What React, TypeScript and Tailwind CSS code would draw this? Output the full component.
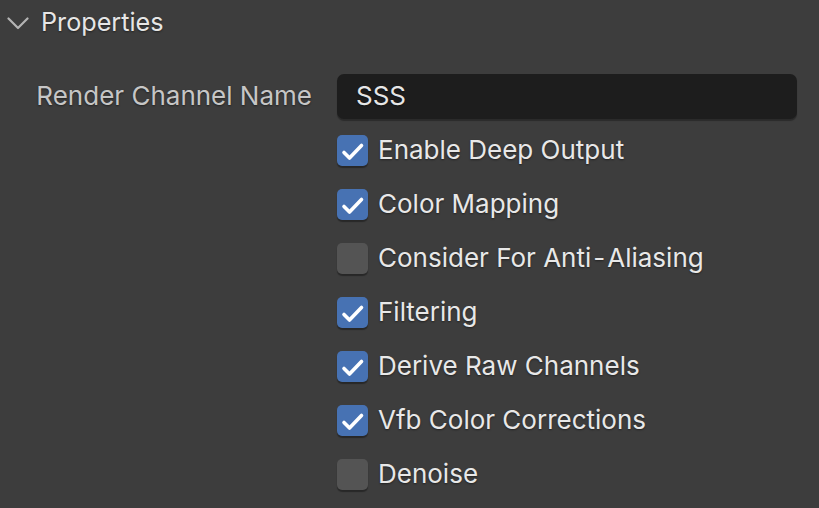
import React from "react";

const items: { label: React.ReactNode; checked: boolean }[] = [
  { label: "Enable Deep Output", checked: true },
  { label: "Color Mapping", checked: true },
  {
    label: (
      <>
        Consider For Anti<span className="mx-[2px]">-</span>Aliasing
      </>
    ),
    checked: false,
  },
  { label: "Filtering", checked: true },
  { label: "Derive Raw Channels", checked: true },
  { label: "Vfb Color Corrections", checked: true },
  { label: "Denoise", checked: false },
];

function Check({ checked }: { checked: boolean }) {
  return (
    <div
      className={
        checked
          ? "w-[31px] h-[31px] rounded-[5px] bg-[#4772b3] shadow-[0_2px_1px_rgba(0,0,0,0.35)] flex items-center justify-center shrink-0"
          : "w-[31px] h-[31px] rounded-[5px] bg-[#545454] shadow-[0_2px_1px_rgba(0,0,0,0.35)] shrink-0"
      }
    >
      {checked && (
        <svg width="31" height="31" viewBox="0 0 31 31">
          <path
            d="M7 17.5 L12.5 23 L24.5 10.5"
            fill="none"
            stroke="#ffffff"
            strokeWidth="3.6"
            strokeLinecap="round"
            strokeLinejoin="round"
          />
        </svg>
      )}
    </div>
  );
}

export default function App() {
  return (
    <div className="w-[819px] h-[508px] bg-[#3d3d3d] overflow-hidden font-['Inter',sans-serif] [text-shadow:0_1px_2px_rgba(0,0,0,0.45)]">
      <div className="h-[44px] flex items-center pt-[2px]">
        <svg width="22" height="14" viewBox="0 0 22 14" className="ml-[7px]">
          <path
            d="M1.5 2.5 L11 12 L20.5 2.5"
            fill="none"
            stroke="#b4b4b4"
            strokeWidth="2.2"
            strokeLinecap="round"
            strokeLinejoin="round"
          />
        </svg>
        <span className="ml-[12px] text-[25.2px] text-[#e6e6e6] leading-none">Properties</span>
      </div>
      <div className="mt-[25px] flex flex-col">
        <div className="h-[54px] flex items-center">
          <div className="w-[313px] text-right pr-[1px] text-[26px] text-[#c6c6c6] leading-none">
            Render Channel Name
          </div>
          <div className="ml-[24px] w-[460px] h-[45px] rounded-[7px] bg-[#1d1d1d] shadow-[0_2px_1px_rgba(0,0,0,0.3)] flex items-center pl-[19px] text-[26px] text-[#e6e6e6] leading-none">
            SSS
          </div>
        </div>
        {items.map((it, i) => (
          <div key={i} className="h-[54px] flex items-center pl-[337px]">
            <Check checked={it.checked} />
            <span className="ml-[10px] text-[26px] text-[#e8e8e8] leading-none">{it.label}</span>
          </div>
        ))}
      </div>
    </div>
  );
}
